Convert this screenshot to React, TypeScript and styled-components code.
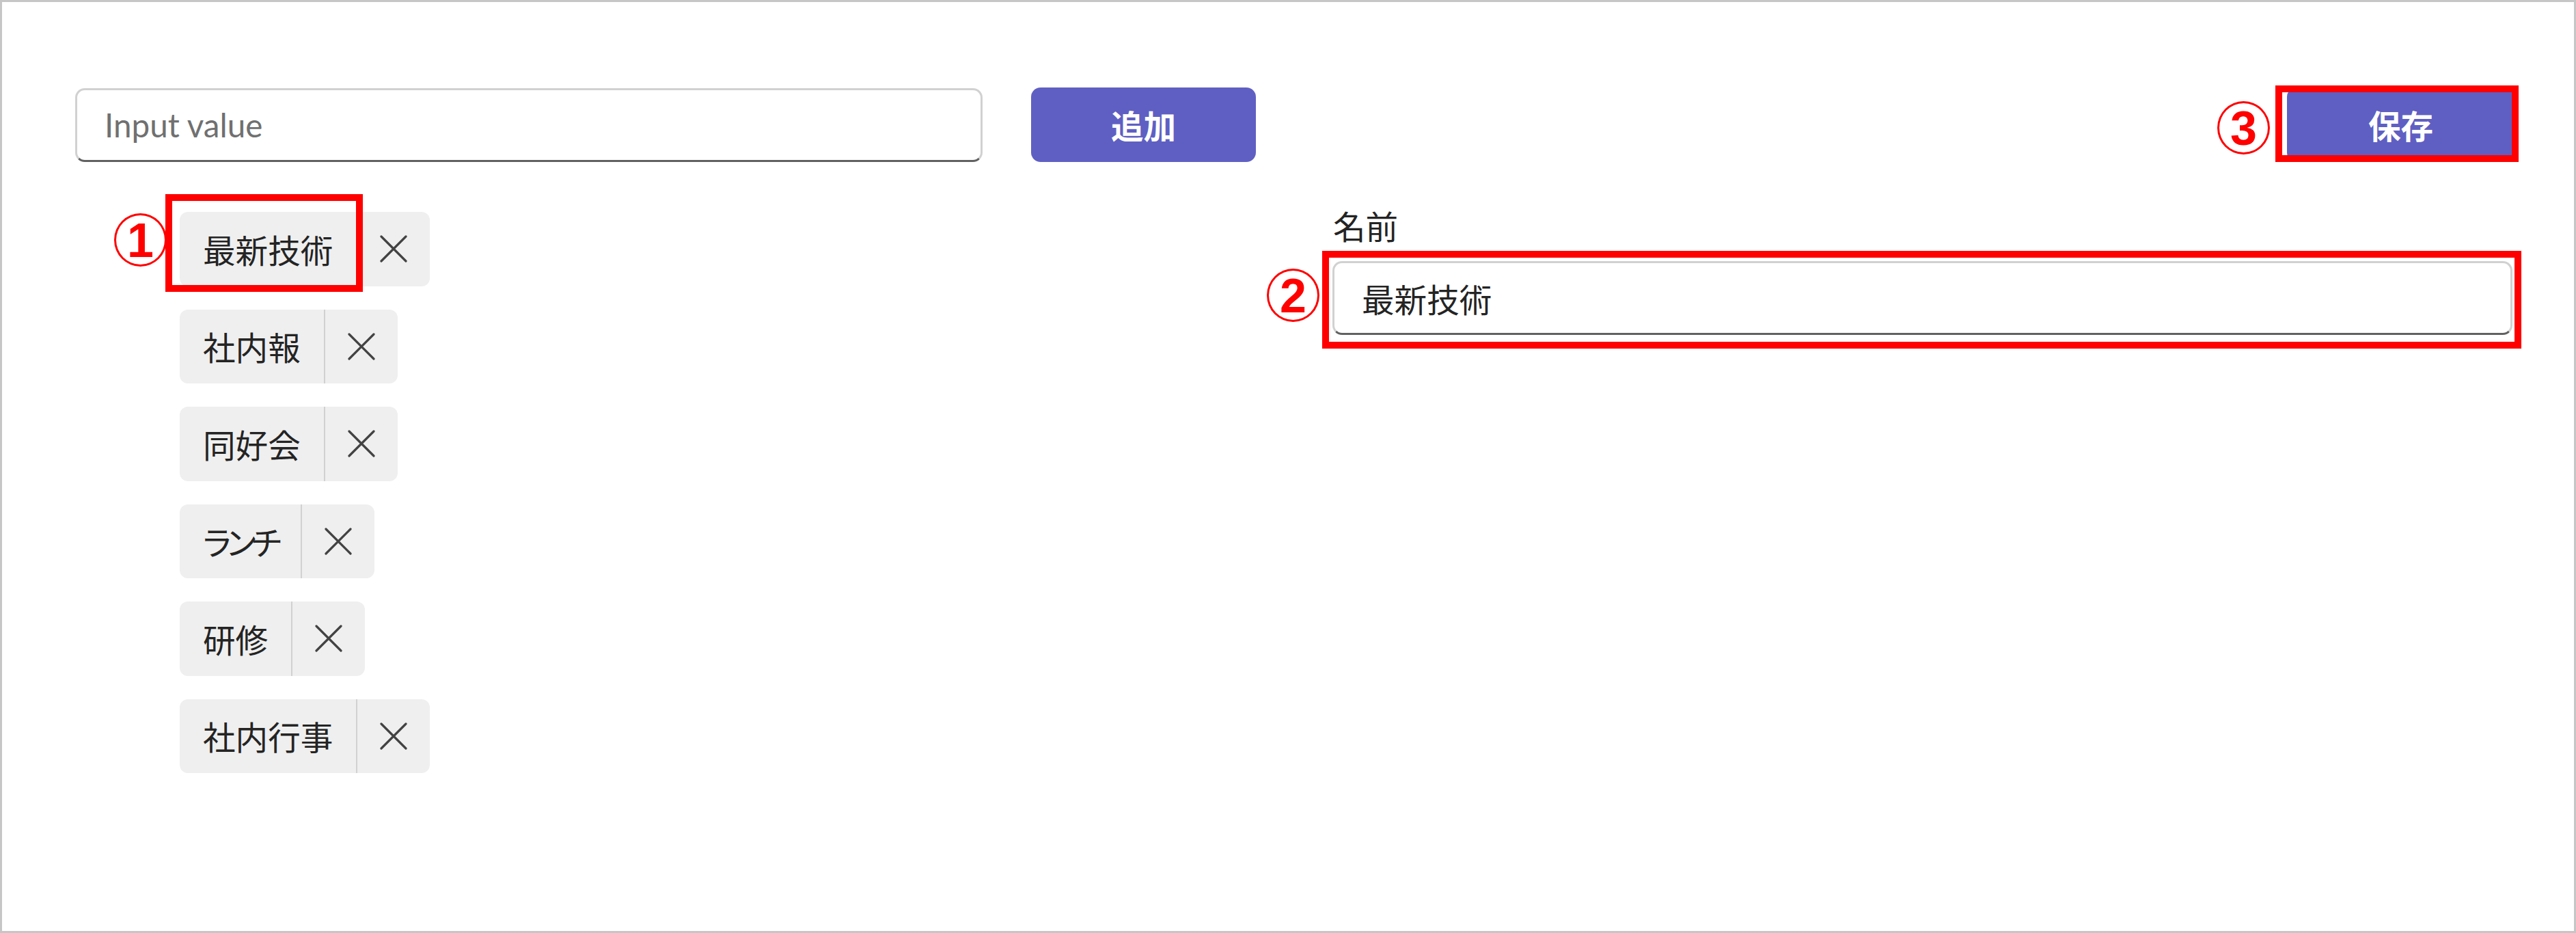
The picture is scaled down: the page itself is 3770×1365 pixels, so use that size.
import React, { FC, ReactElement } from 'react';
import styled, { createGlobalStyle } from 'styled-components';

const GlobalStyle = createGlobalStyle`
body {
  margin: 0;
  background: #ffffff;
  font-family: 'Segoe UI', Lato, 'Noto Sans CJK JP', sans-serif;
}
* { box-sizing: border-box; }
`

const Frame = styled.div`
width: 3770px;
height: 1365px;
border: 3px solid #c6c6c6;
background: #ffffff;
padding: 125px 87px 0 107px;
display: flex;
flex-direction: column;`

const Header = styled.div`
display: flex;
align-items: center;
justify-content: space-between;
height: 109px;`

const AddGroup = styled.div`
display: flex;
align-items: center;
gap: 71px;`

const TextInput = styled.input<{ $width?: string }>`
width: ${p => p.$width || '100%'};
height: 108px;
border: 3px solid #d1d1d1;
border-bottom-color: #616161;
border-radius: 14px;
padding: 0 40px;
font-family: 'Segoe UI', Lato, 'Noto Sans CJK JP', sans-serif;
font-size: 47.6px;
color: #242424;
background: #ffffff;
outline: none;

&::placeholder {
  color: #707070;
}`

const PrimaryButton = styled.button<{ $width: number }>`
width: ${p => p.$width}px;
height: 109px;
border: none;
border-radius: 14px;
background: #5f5fc3;
color: #ffffff;
font-family: 'Segoe UI', Lato, 'Noto Sans CJK JP', sans-serif;
font-size: 47.6px;
font-weight: 700;
cursor: pointer;`

const Body = styled.div`
display: flex;
margin-top: 63px;`

const TagList = styled.div`
display: flex;
flex-direction: column;
align-items: flex-start;
gap: 34px;
padding: 10px 0 0 153px;`

const Tag = styled.div`
display: flex;
height: 108.5px;
background: #efefef;
border-radius: 12px;`

// kana in the original font is proportional, so kana labels run narrower
const TagLabel = styled.span<{ $kana?: boolean }>`
position: relative;
display: flex;
align-items: center;
padding: 0 34px;
font-size: 47.6px;
color: #242424;
font-feature-settings: 'palt';
letter-spacing: ${p => (p.$kana ? '-6px' : '0')};
border-right: 2px solid #d1d1d1;`

const DismissButton = styled.button`
width: 106px;
height: 100%;
display: flex;
align-items: center;
justify-content: center;
border: none;
background: transparent;
padding: 0;
cursor: pointer;`

const Form = styled.div`
margin-left: auto;
width: 1730px;
padding-right: 3px;
display: flex;
flex-direction: column;`

const FieldLabel = styled.label`
font-size: 47.6px;
line-height: 64px;
color: #242424;
padding-left: 1px;
margin-bottom: 18px;`

const Marked = styled.div`
position: relative;`

const RedFrame = styled.div<{ $t: number; $r: number; $b: number; $l: number }>`
position: absolute;
top: ${p => p.$t}px;
right: ${p => p.$r}px;
bottom: ${p => p.$b}px;
left: ${p => p.$l}px;
border: 10px solid #ff0000;
pointer-events: none;`

const Badge = styled.span<{ $x: number; $y: number }>`
position: absolute;
left: ${p => p.$x}px;
top: ${p => p.$y}px;
width: 77px;
height: 78px;
border: 3px solid #ff0000;
border-radius: 50%;
display: flex;
align-items: center;
justify-content: center;
color: #ff0000;
font-family: 'Liberation Sans', Arial, sans-serif;
font-size: 70px;
font-weight: 700;
line-height: 1;
padding-top: 2px;`

type Mark = { n: number; t: number; r: number; b: number; l: number; x: number; y: number }

const Annotation: FC<{ mark: Mark }> = ({ mark }): ReactElement => (
    <>
        <RedFrame $t={mark.t} $r={mark.r} $b={mark.b} $l={mark.l} />
        <Badge $x={mark.x} $y={mark.y}>{mark.n}</Badge>
    </>
)

const DismissIcon = () => (
    <svg width="40" height="40" viewBox="0 0 40 40">
        <path d="M2 2 L38 38 M38 2 L2 38" stroke="#424242" strokeWidth="3.2" strokeLinecap="round" fill="none" />
    </svg>
)

const tags = ['最新技術', '社内報', '同好会', 'ランチ', '研修', '社内行事']
const isKana = (s: string) => /^[\u30A0-\u30FF]+$/.test(s)

const App: FC = (): ReactElement => {
    const tagMark: Mark = { n: 1, t: -26, r: -10, b: -8, l: -21, x: -96, y: 2 }
    const fieldMark: Mark = { n: 2, t: -15, r: -13, b: -20, l: -15, x: -96, y: 11 }
    const saveMark: Mark = { n: 3, t: -3, r: -6, b: 0, l: -17, x: -102, y: 20 }

    return (
        <>
            <GlobalStyle />
            <Frame>
                <Header>
                    <AddGroup>
                        <TextInput $width="1328px" placeholder="Input value" />
                        <PrimaryButton $width={329}>追加</PrimaryButton>
                    </AddGroup>
                    <Marked>
                        <PrimaryButton $width={333}>保存</PrimaryButton>
                        <Annotation mark={saveMark} />
                    </Marked>
                </Header>
                <Body>
                    <TagList>
                        {tags.map((t, i) => (
                            <Tag key={t}>
                                <TagLabel $kana={isKana(t)}>
                                    {t}
                                    {i === 0 && <Annotation mark={tagMark} />}
                                </TagLabel>
                                <DismissButton aria-label="削除">
                                    <DismissIcon />
                                </DismissButton>
                            </Tag>
                        ))}
                    </TagList>
                    <Form>
                        <FieldLabel>名前</FieldLabel>
                        <Marked>
                            <TextInput defaultValue="最新技術" />
                            <Annotation mark={fieldMark} />
                        </Marked>
                    </Form>
                </Body>
            </Frame>
        </>
    )
}
export default App;
